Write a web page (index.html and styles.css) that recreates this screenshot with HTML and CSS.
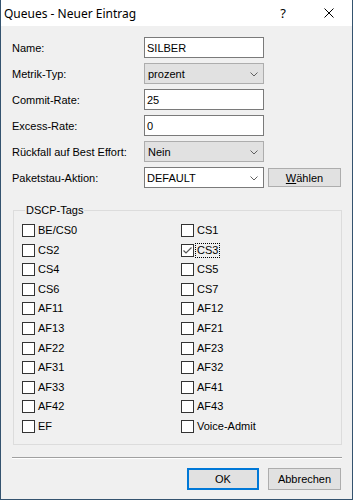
FILE: index.html
```html
<!DOCTYPE html>
<html lang="de">
<head>
    <meta charset="UTF-8">
    <title>Queues - Neuer Eintrag</title>
    <link rel="stylesheet" href="styles.css">
</head>
<body>
    <div class="window">
        <!-- Titelleiste -->
        <div class="titlebar">
            <span class="title">Queues - Neuer Eintrag</span>
            <span class="tb-btn help">?</span>
            <span class="tb-btn close">
                <svg width="10" height="10" viewBox="0 0 10 10"><path d="M0.5 0.5 L9.5 9.5 M9.5 0.5 L0.5 9.5" stroke="#000" stroke-width="1" fill="none"/></svg>
            </span>
        </div>

        <div class="content">
            <div class="form">
                <label>Name:</label>
                <div class="edit">SILBER</div>
                <span></span>

                <label>Metrik-Typ:</label>
                <div class="select">prozent<svg class="arrow" width="8" height="5" viewBox="0 0 8 5"><path d="M0.5 0.5 L4 4 L7.5 0.5" stroke="#606060" fill="none"/></svg></div>
                <span></span>

                <label>Commit-Rate:</label>
                <div class="edit">25</div>
                <span></span>

                <label>Excess-Rate:</label>
                <div class="edit">0</div>
                <span></span>

                <label>R&uuml;ckfall auf Best Effort:</label>
                <div class="select">Nein<svg class="arrow" width="8" height="5" viewBox="0 0 8 5"><path d="M0.5 0.5 L4 4 L7.5 0.5" stroke="#606060" fill="none"/></svg></div>
                <span></span>

                <label>Paketstau-Aktion:</label>
                <div class="edit combo">DEFAULT<svg class="arrow" width="8" height="5" viewBox="0 0 8 5"><path d="M0.5 0.5 L4 4 L7.5 0.5" stroke="#606060" fill="none"/></svg></div>
                <button class="btn pick"><u>W</u>&auml;hlen</button>
            </div>

            <fieldset class="group">
                <legend>DSCP-Tags</legend>
                <div class="checks" id="checks"></div>
            </fieldset>

            <div class="separator"></div>

            <div class="buttons">
                <button class="btn default">OK</button>
                <button class="btn">Abbrechen</button>
            </div>
        </div>
    </div>

    <script>
        // DSCP-Tags, zeilenweise (links, rechts)
        var tags = [
            "BE/CS0", "CS1", "CS2", "CS3", "CS4", "CS5", "CS6", "CS7",
            "AF11", "AF12", "AF13", "AF21", "AF22", "AF23", "AF31", "AF32",
            "AF33", "AF41", "AF42", "AF43", "EF", "Voice-Admit"
        ];
        var checkSvg = '<svg width="11" height="11" viewBox="0 0 11 11"><path d="M1.5 5.5 L4 8 L9.5 2.5" stroke="#555" stroke-width="1.2" fill="none"/></svg>';
        var html = "";
        tags.forEach(function (tag) {
            var checked = tag === "CS3";
            html += '<div class="check">' +
                '<span class="box">' + (checked ? checkSvg : '') + '</span>' +
                '<span class="' + (checked ? 'text focus' : 'text') + '">' + tag + '</span>' +
                '</div>';
        });
        document.getElementById("checks").innerHTML = html;
    </script>
</body>
</html>
```

FILE: styles.css
```css
/* Grundlayout */
body {
    margin: 0;
    padding: 0;
    background-color: #f0f0f0;
}

.window {
    width: 353px;
    height: 500px;
    box-sizing: border-box;
    border: 1px solid #34536f;
    border-top: none;
    background-color: #f0f0f0;
    font-family: "Liberation Sans", Arial, sans-serif;
    font-size: 11px;
    color: #000;
    display: flex;
    flex-direction: column;
}

/* Titelleiste */
.titlebar {
    height: 26px;
    background-color: #fff;
    display: flex;
    align-items: center;
    padding-left: 3px;
}

.title {
    flex: 1;
    font-family: "Noto Sans", sans-serif;
    font-size: 12px;
}

.tb-btn {
    width: 46px;
    height: 26px;
    display: flex;
    align-items: center;
    justify-content: center;
}

.help {
    font-family: "Noto Sans", sans-serif;
    font-size: 13px;
}

.close svg {
    display: block;
}

.content {
    flex: 1;
    padding: 11px 10px 0 11px;
    display: flex;
    flex-direction: column;
}

/* Formular */
.form {
    display: grid;
    grid-template-columns: 128px 120px 73px;
    grid-auto-rows: 21px;
    column-gap: 4px;
    row-gap: 5px;
    align-items: center;
}

.form label {
    align-self: center;
}

.edit,
.select {
    height: 21px;
    box-sizing: border-box;
    border: 1px solid #7a7a7a;
    background-color: #fff;
    padding-left: 2px;
    display: flex;
    align-items: center;
    position: relative;
}

.select {
    border-color: #adadad;
    background-color: #e1e1e1;
    padding-left: 3px;
}

.arrow {
    position: absolute;
    right: 5px;
    top: 8px;
}

.btn {
    font-family: "Liberation Sans", Arial, sans-serif;
    font-size: 11px;
    color: #000;
    background-color: #e1e1e1;
    border: 1px solid #adadad;
    height: 22px;
    padding: 0;
    margin: 0;
}

.pick {
    height: 19px;
}

/* Gruppe DSCP-Tags */
.group {
    margin: 16px 0 0 1px;
    width: 329px;
    box-sizing: border-box;
    border: 1px solid #dcdcdc;
    padding: 8px 0 0 8px;
    height: 241px;
}

.group legend {
    padding: 0 1px;
    margin-left: 3px;
}

.checks {
    display: grid;
    grid-template-columns: 159px 140px;
    grid-auto-rows: 19.6px;
}

.check {
    display: flex;
    align-items: flex-start;
}

.box {
    width: 13px;
    height: 13px;
    box-sizing: border-box;
    border: 1px solid #333;
    background-color: #fff;
    display: flex;
    align-items: center;
    justify-content: center;
    margin-right: 3px;
}

.box svg {
    display: block;
}

.text {
    line-height: 13px;
}

.focus {
    outline: 1px dotted #000;
    outline-offset: 0;
    padding: 0 1px;
    margin-left: -1px;
}

/* Trennlinie und Schaltflächen */
.separator {
    margin-top: 12px;
    border-top: 1px solid #a0a0a0;
    border-bottom: 1px solid #fff;
    width: 330px;
}

.buttons {
    display: flex;
    justify-content: flex-end;
    gap: 9px;
    margin-top: 9px;
    margin-right: 1px;
}

.buttons .btn {
    width: 73px;
}

.buttons .default {
    width: 72px;
    border: 2px solid #0078d7;
}
```
